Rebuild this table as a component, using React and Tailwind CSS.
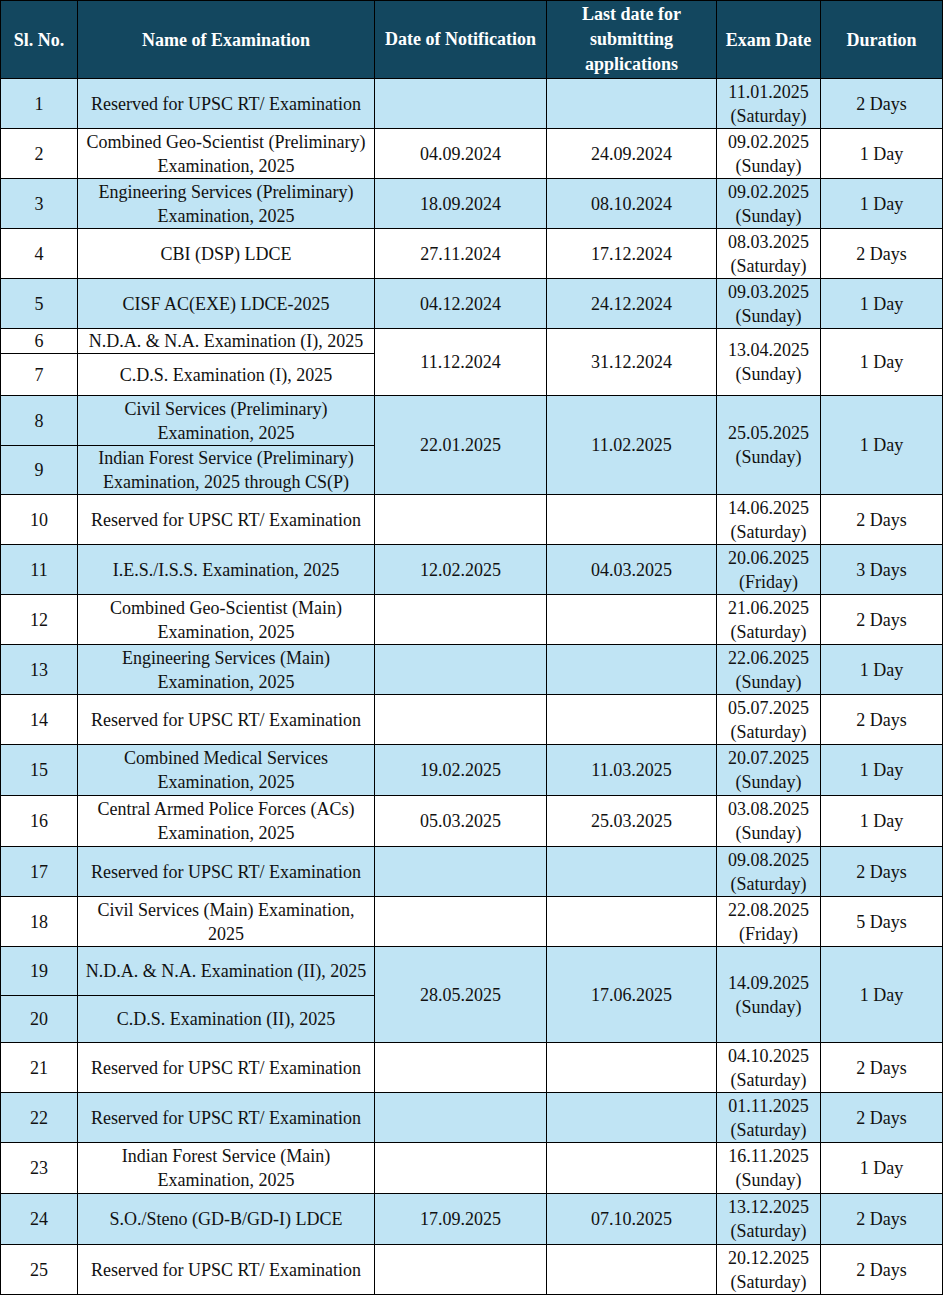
const rows = [
  { no: "1", name: ["Reserved for UPSC RT/ Examination"], notif: "", last: "", exam: "11.01.2025", day: "(Saturday)", dur: "2 Days", blue: true, h: 50 },
  { no: "2", name: ["Combined Geo-Scientist (Preliminary)", "Examination, 2025"], notif: "04.09.2024", last: "24.09.2024", exam: "09.02.2025", day: "(Sunday)", dur: "1 Day", h: 50 },
  { no: "3", name: ["Engineering Services (Preliminary)", "Examination, 2025"], notif: "18.09.2024", last: "08.10.2024", exam: "09.02.2025", day: "(Sunday)", dur: "1 Day", blue: true, h: 50 },
  { no: "4", name: ["CBI (DSP) LDCE"], notif: "27.11.2024", last: "17.12.2024", exam: "08.03.2025", day: "(Saturday)", dur: "2 Days", h: 50 },
  { no: "5", name: ["CISF AC(EXE) LDCE-2025"], notif: "04.12.2024", last: "24.12.2024", exam: "09.03.2025", day: "(Sunday)", dur: "1 Day", blue: true, h: 50 },
  { no: "6", name: ["N.D.A. & N.A. Examination (I), 2025"], notif: "11.12.2024", last: "31.12.2024", exam: "13.04.2025", day: "(Sunday)", dur: "1 Day", span: 2, h: 25, tight: true },
  { no: "7", name: ["C.D.S. Examination (I), 2025"], skip: true, h: 42 },
  { no: "8", name: ["Civil Services (Preliminary)", "Examination, 2025"], notif: "22.01.2025", last: "11.02.2025", exam: "25.05.2025", day: "(Sunday)", dur: "1 Day", span: 2, blue: true, h: 50 },
  { no: "9", name: ["Indian Forest Service (Preliminary)", "Examination, 2025 through CS(P)"], skip: true, blue: true, h: 49 },
  { no: "10", name: ["Reserved for UPSC RT/ Examination"], notif: "", last: "", exam: "14.06.2025", day: "(Saturday)", dur: "2 Days", h: 50 },
  { no: "11", name: ["I.E.S./I.S.S. Examination, 2025"], notif: "12.02.2025", last: "04.03.2025", exam: "20.06.2025", day: "(Friday)", dur: "3 Days", blue: true, h: 50 },
  { no: "12", name: ["Combined Geo-Scientist (Main)", "Examination, 2025"], notif: "", last: "", exam: "21.06.2025", day: "(Saturday)", dur: "2 Days", h: 50 },
  { no: "13", name: ["Engineering Services (Main)", "Examination, 2025"], notif: "", last: "", exam: "22.06.2025", day: "(Sunday)", dur: "1 Day", blue: true, h: 50 },
  { no: "14", name: ["Reserved for UPSC RT/ Examination"], notif: "", last: "", exam: "05.07.2025", day: "(Saturday)", dur: "2 Days", h: 50 },
  { no: "15", name: ["Combined Medical Services", "Examination, 2025"], notif: "19.02.2025", last: "11.03.2025", exam: "20.07.2025", day: "(Sunday)", dur: "1 Day", blue: true, h: 51 },
  { no: "16", name: ["Central Armed Police Forces (ACs)", "Examination, 2025"], notif: "05.03.2025", last: "25.03.2025", exam: "03.08.2025", day: "(Sunday)", dur: "1 Day", h: 51 },
  { no: "17", name: ["Reserved for UPSC RT/ Examination"], notif: "", last: "", exam: "09.08.2025", day: "(Saturday)", dur: "2 Days", blue: true, h: 50 },
  { no: "18", name: ["Civil Services (Main) Examination,", "2025"], notif: "", last: "", exam: "22.08.2025", day: "(Friday)", dur: "5 Days", h: 50 },
  { no: "19", name: ["N.D.A. & N.A. Examination (II), 2025"], notif: "28.05.2025", last: "17.06.2025", exam: "14.09.2025", day: "(Sunday)", dur: "1 Day", span: 2, blue: true, h: 49 },
  { no: "20", name: ["C.D.S. Examination (II), 2025"], skip: true, blue: true, h: 47 },
  { no: "21", name: ["Reserved for UPSC RT/ Examination"], notif: "", last: "", exam: "04.10.2025", day: "(Saturday)", dur: "2 Days", h: 50 },
  { no: "22", name: ["Reserved for UPSC RT/ Examination"], notif: "", last: "", exam: "01.11.2025", day: "(Saturday)", dur: "2 Days", blue: true, h: 50 },
  { no: "23", name: ["Indian Forest Service (Main)", "Examination, 2025"], notif: "", last: "", exam: "16.11.2025", day: "(Sunday)", dur: "1 Day", h: 51 },
  { no: "24", name: ["S.O./Steno (GD-B/GD-I) LDCE"], notif: "17.09.2025", last: "07.10.2025", exam: "13.12.2025", day: "(Saturday)", dur: "2 Days", blue: true, h: 51 },
  { no: "25", name: ["Reserved for UPSC RT/ Examination"], notif: "", last: "", exam: "20.12.2025", day: "(Saturday)", dur: "2 Days", h: 50 },
];

const td = "border border-black p-0 text-center align-middle [font-family:Liberation_Serif,serif] text-[18px]";

const Lines = ({ lines }) =>
  lines.map((l, i) => (
    <span key={i} className="block whitespace-nowrap [font-family:Liberation_Serif,serif]">
      {l}
    </span>
  ));

export default function App() {
  return (
    <div className="bg-white w-[944px] min-h-[1299px] font-serif">
      <table className="table-fixed border-collapse w-[942px] font-serif text-[18px] leading-[24px] text-[#111]">
        <colgroup>
          <col className="w-[77px]" />
          <col className="w-[297px]" />
          <col className="w-[172px]" />
          <col className="w-[170px]" />
          <col className="w-[104px]" />
          <col className="w-[122px]" />
        </colgroup>
        <thead>
          <tr className="h-[78px] bg-[#13475f] text-white font-bold">
            <th className={td}>Sl. No.</th>
            <th className={td}>Name of Examination</th>
            <th className={`${td} leading-[25px]`}>Date of Notification</th>
            <th className={`${td} leading-[25px]`}>
              <Lines lines={["Last date for", "submitting", "applications"]} />
            </th>
            <th className={td}>Exam Date</th>
            <th className={td}>Duration</th>
          </tr>
        </thead>
        <tbody>
          {rows.map((r) => {
            const bg = r.blue ? "bg-[#c0e4f4]" : "bg-white";
            return (
              <tr key={r.no} style={{ height: r.h }}>
                <td className={`${td} ${bg} ${r.tight ? "leading-[22px]" : ""}`}>{r.no}</td>
                <td className={`${td} ${bg} ${r.tight ? "leading-[22px]" : ""}`}>
                  <Lines lines={r.name} />
                </td>
                {!r.skip && (
                  <>
                    <td rowSpan={r.span || 1} className={`${td} ${bg}`}>{r.notif}</td>
                    <td rowSpan={r.span || 1} className={`${td} ${bg}`}>{r.last}</td>
                    <td rowSpan={r.span || 1} className={`${td} ${bg}`}>
                      <Lines lines={[r.exam, r.day]} />
                    </td>
                    <td rowSpan={r.span || 1} className={`${td} ${bg}`}>{r.dur}</td>
                  </>
                )}
              </tr>
            );
          })}
        </tbody>
      </table>
    </div>
  );
}
